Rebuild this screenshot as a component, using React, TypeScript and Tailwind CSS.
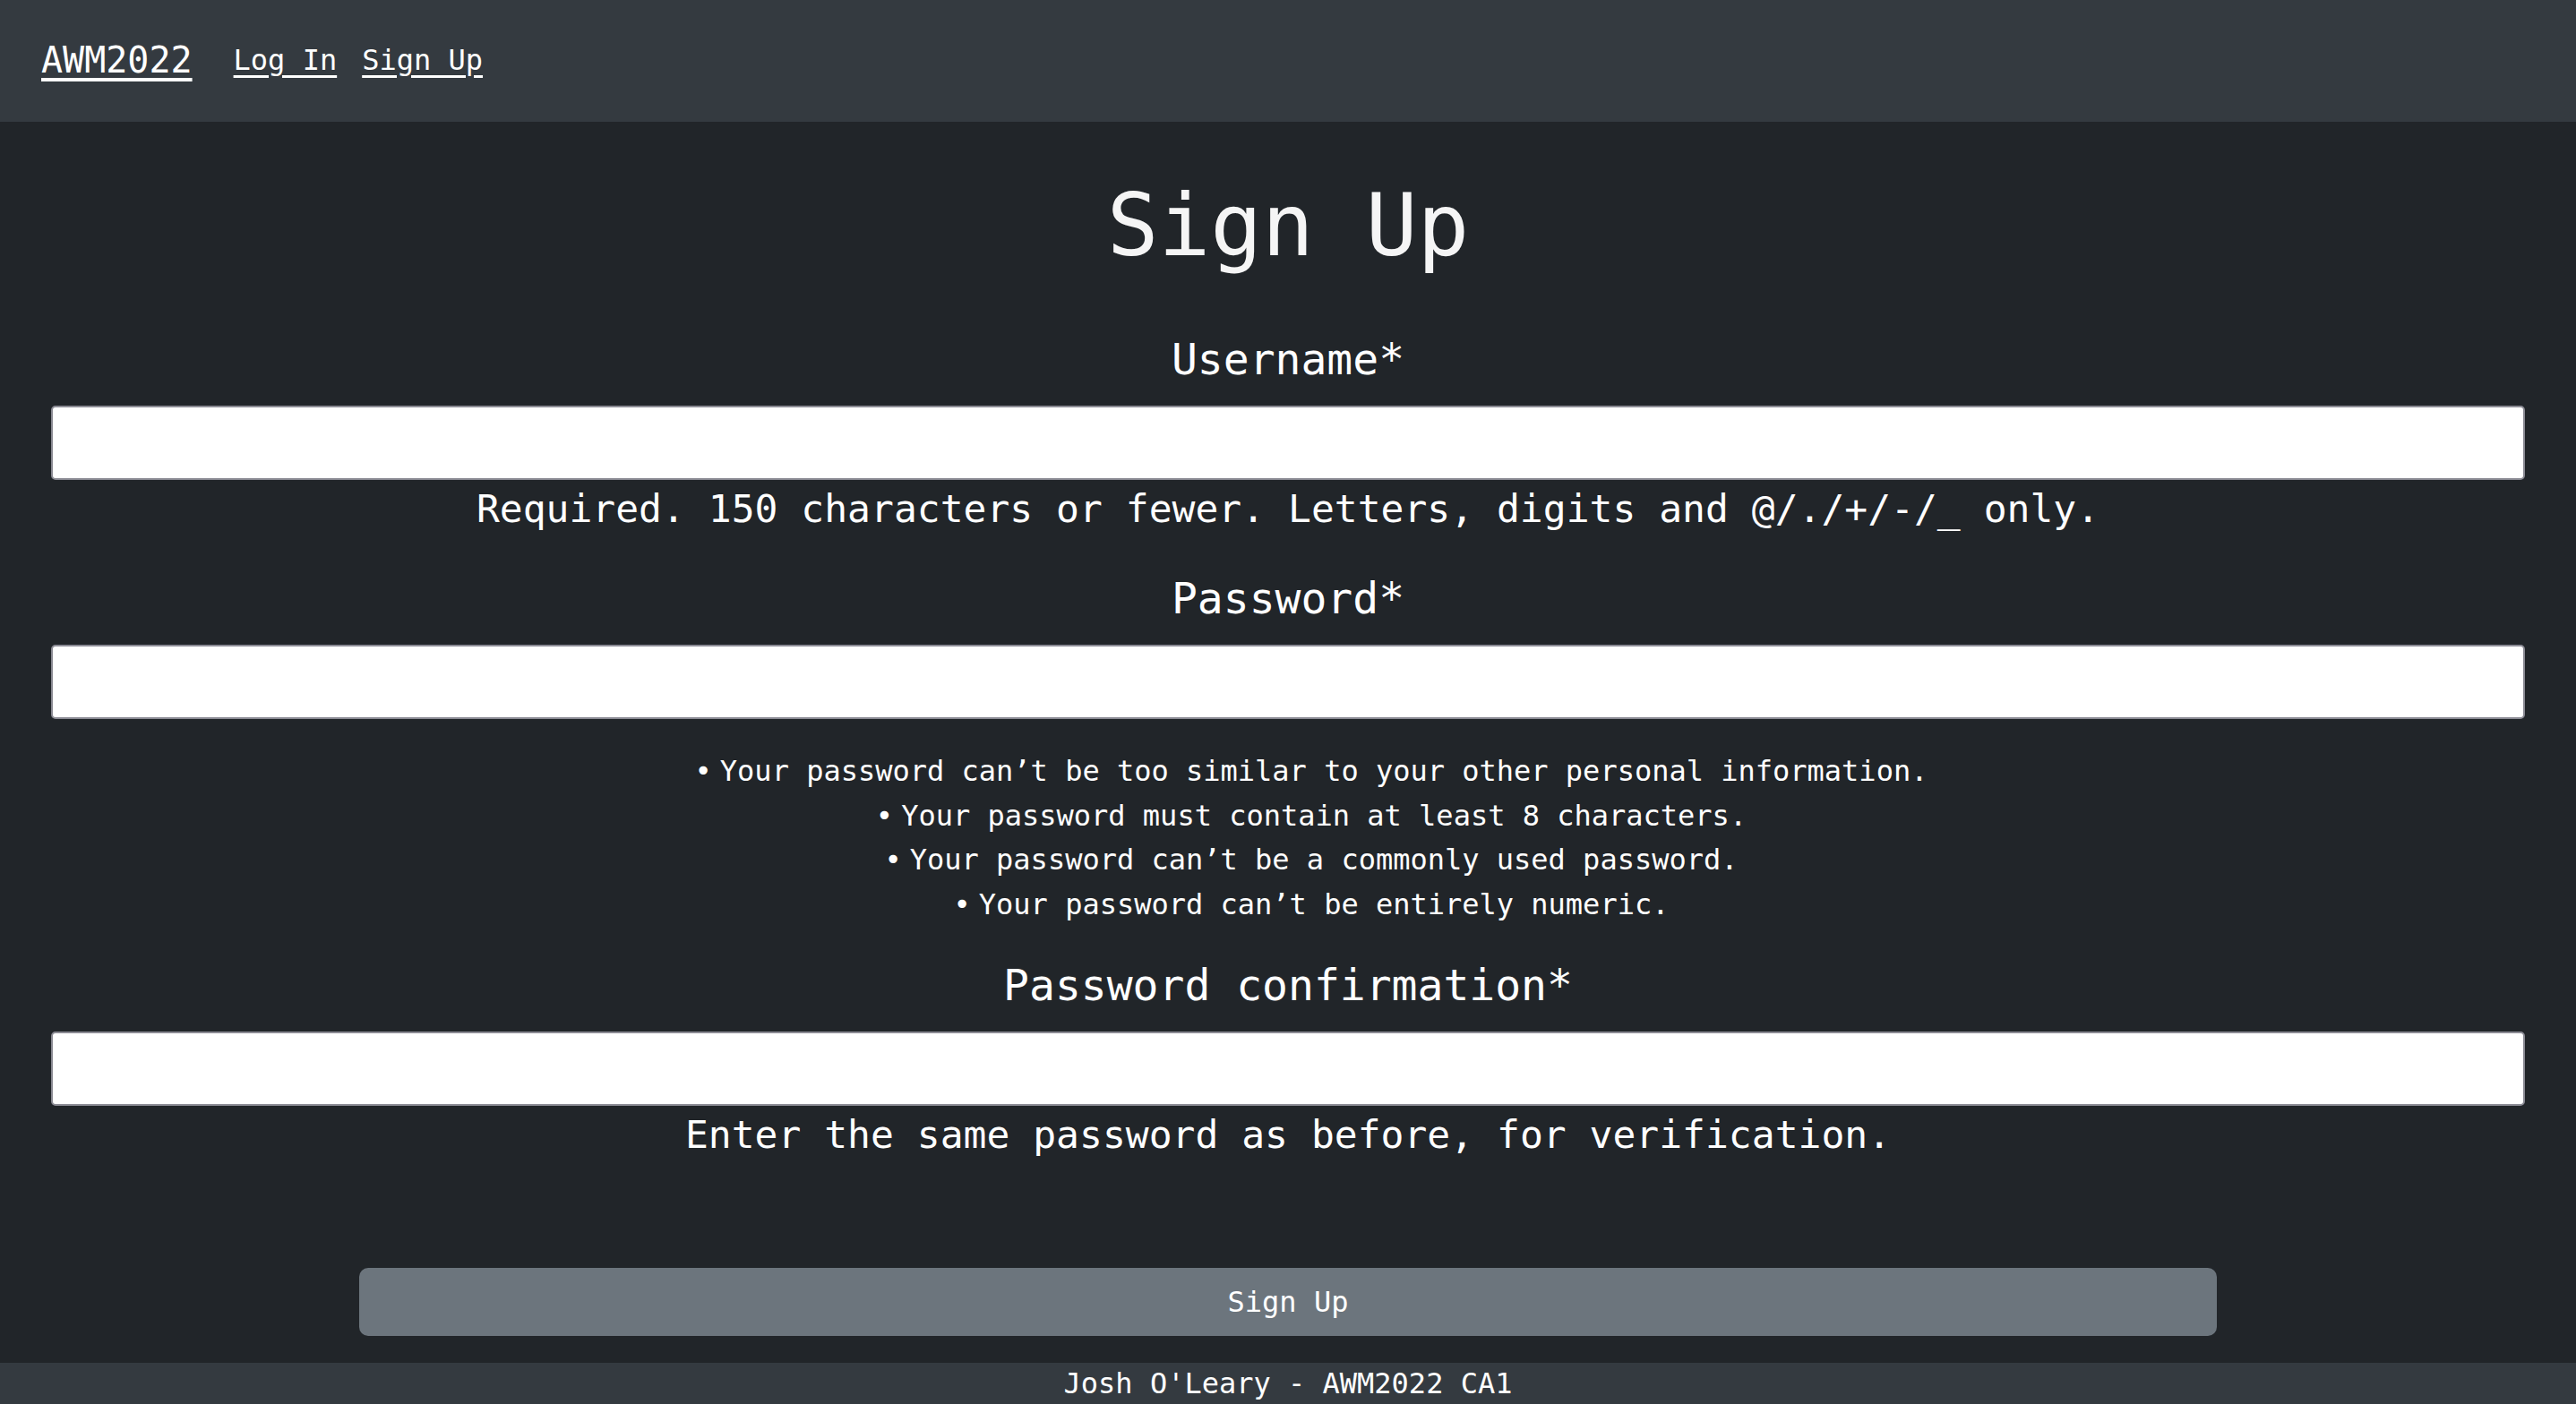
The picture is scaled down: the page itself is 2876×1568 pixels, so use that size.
import React from 'react';

const rules = [
  'Your password can’t be too similar to your other personal information.',
  'Your password must contain at least 8 characters.',
  'Your password can’t be a commonly used password.',
  'Your password can’t be entirely numeric.',
];

function Field({ label, type }: { label: string; type: string }) {
  return (
    <>
      <label className="block text-center text-[48px] leading-[58px] text-white">{label}</label>
      <input
        type={type}
        className="mt-[23px] block h-[83px] w-full rounded-[5px] border-2 border-[#8b8b94] bg-white px-4 text-[32px] text-black outline-none"
      />
    </>
  );
}

export default function App() {
  return (
    <div className="flex min-h-screen w-full flex-col bg-[#212529] font-['DejaVu_Sans_Mono',monospace] text-white">
      {/* Navbar */}
      <nav className="flex h-[136px] items-center bg-[#343a40] pb-[3px] pl-[46px]">
        <a href="#" className="text-[40px] leading-none text-white underline underline-offset-[6px]">
          AWM2022
        </a>
        <div className="ml-[46px] flex items-center gap-[28px]">
          <a href="#" className="text-[32px] leading-none text-white underline underline-offset-[6px]">Log In</a>
          <a href="#" className="text-[32px] leading-none text-white underline underline-offset-[6px]">Sign Up</a>
        </div>
      </nav>

      <main className="flex-1 px-[57px]">
        <h1 className="mt-[59px] text-center text-[96px] leading-[115px] text-[#f5f5f5]">Sign Up</h1>

        <form onSubmit={(e) => e.preventDefault()}>
          <div className="mt-[62px]">
            <Field label="Username*" type="text" />
            <p className="text-center text-[43px] leading-[65px]">
              Required. 150 characters or fewer. Letters, digits and @/./+/-/_ only.
            </p>
          </div>

          <div className="mt-[38px]">
            <Field label="Password*" type="password" />
            <ul className="mt-[34px] pl-[52px] text-center text-[32px] leading-[49.5px]">
              {rules.map((rule) => (
                <li key={rule}>
                  <span>•</span>
                  <span className="ml-[9px]">{rule}</span>
                </li>
              ))}
            </ul>
          </div>

          <div className="mt-[36px]">
            <Field label="Password confirmation*" type="password" />
            <p className="text-center text-[43px] leading-[65px]">
              Enter the same password as before, for verification.
            </p>
          </div>

          <button
            type="submit"
            className="mx-auto mt-[116px] block h-[76px] w-[2074px] rounded-[10px] bg-[#6c757d] text-[32px] text-white"
          >
            Sign Up
          </button>
        </form>
      </main>

      <footer className="mt-[29px] flex h-[46px] items-center justify-center bg-[#343a40] text-[32px] leading-none text-white">
        Josh O'Leary - AWM2022 CA1
      </footer>
    </div>
  );
}
